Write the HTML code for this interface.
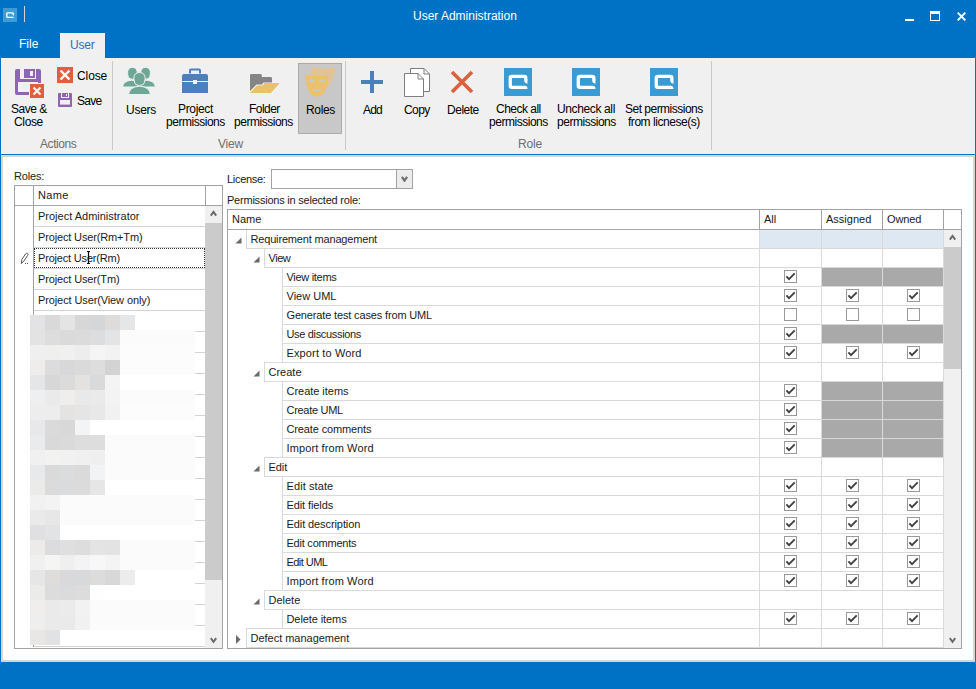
<!DOCTYPE html>
<html><head><meta charset="utf-8"><title>User Administration</title>
<style>
html,body{margin:0;padding:0}
body{width:976px;height:689px;overflow:hidden;background:#0072C6;position:relative;font-family:'Liberation Sans', sans-serif}
body div, body svg{position:absolute}
.t{white-space:pre;line-height:13px}
</style></head><body>
<div style="left:1px;top:58px;width:974px;height:96px;background:#F0F0F0;"></div>
<div style="left:60px;top:33px;width:45px;height:25px;background:#F0F0F0;"></div>
<div style="left:1px;top:155px;width:974px;height:507px;background:#D9D5D1;"></div>
<div style="left:3px;top:157px;width:970px;height:503px;background:#FFFFFF;"></div>
<div style="left:112px;top:61px;width:1px;height:89px;background:#C9C9C9;"></div>
<div style="left:345px;top:61px;width:1px;height:89px;background:#C9C9C9;"></div>
<div style="left:711px;top:61px;width:1px;height:89px;background:#C9C9C9;"></div>
<div style="left:298px;top:63px;width:44px;height:71px;background:#C8C8C8;box-sizing:border-box;border:1px solid #ABABAB;"></div>
<div style="left:14px;top:185px;width:209px;height:464px;background:#FFFFFF;box-sizing:border-box;border:1px solid #A3A3A3;"></div>
<div style="left:15px;top:205px;width:207px;height:1px;background:#A3A3A3;"></div>
<div style="left:33px;top:186px;width:1px;height:461px;background:#A3A3A3;"></div>
<div style="left:205px;top:186px;width:1px;height:19px;background:#A3A3A3;"></div>
<div style="left:34px;top:226px;width:171px;height:1px;background:#D4D4D4;"></div>
<div style="left:34px;top:247px;width:171px;height:1px;background:#D4D4D4;"></div>
<div style="left:34px;top:268px;width:171px;height:1px;background:#D4D4D4;"></div>
<div style="left:34px;top:289px;width:171px;height:1px;background:#D4D4D4;"></div>
<div style="left:34px;top:310px;width:171px;height:1px;background:#D4D4D4;"></div>
<div style="left:34px;top:331px;width:171px;height:1px;background:#D4D4D4;"></div>
<div style="left:34px;top:352px;width:171px;height:1px;background:#D4D4D4;"></div>
<div style="left:34px;top:373px;width:171px;height:1px;background:#D4D4D4;"></div>
<div style="left:34px;top:394px;width:171px;height:1px;background:#D4D4D4;"></div>
<div style="left:34px;top:415px;width:171px;height:1px;background:#D4D4D4;"></div>
<div style="left:34px;top:436px;width:171px;height:1px;background:#D4D4D4;"></div>
<div style="left:34px;top:457px;width:171px;height:1px;background:#D4D4D4;"></div>
<div style="left:34px;top:478px;width:171px;height:1px;background:#D4D4D4;"></div>
<div style="left:34px;top:499px;width:171px;height:1px;background:#D4D4D4;"></div>
<div style="left:34px;top:520px;width:171px;height:1px;background:#D4D4D4;"></div>
<div style="left:34px;top:541px;width:171px;height:1px;background:#D4D4D4;"></div>
<div style="left:34px;top:562px;width:171px;height:1px;background:#D4D4D4;"></div>
<div style="left:34px;top:583px;width:171px;height:1px;background:#D4D4D4;"></div>
<div style="left:34px;top:604px;width:171px;height:1px;background:#D4D4D4;"></div>
<div style="left:34px;top:625px;width:171px;height:1px;background:#D4D4D4;"></div>
<div style="left:34px;top:646px;width:171px;height:1px;background:#D4D4D4;"></div>
<div style="left:205px;top:206px;width:17px;height:442px;background:#F0F0F0;"></div>
<div style="left:205px;top:223px;width:17px;height:357px;background:#CBCBCB;"></div>
<div style="left:34px;top:248px;width:171px;height:20px;box-sizing:border-box;border:1px dotted #333;"></div>
<div style="left:30px;top:315px;width:165px;height:15px;background:#FFFFFF;"></div>
<div style="left:30px;top:315px;width:15px;height:15px;background:#E3E3E5;"></div>
<div style="left:45px;top:315px;width:15px;height:15px;background:#D9D9D9;"></div>
<div style="left:60px;top:315px;width:15px;height:15px;background:#E3E5E3;"></div>
<div style="left:75px;top:315px;width:15px;height:15px;background:#D7D7D7;"></div>
<div style="left:90px;top:315px;width:15px;height:15px;background:#D5D6D8;"></div>
<div style="left:105px;top:315px;width:15px;height:15px;background:#DDDCDA;"></div>
<div style="left:120px;top:315px;width:15px;height:15px;background:#E5E6E8;"></div>
<div style="left:30px;top:330px;width:165px;height:15px;background:#FBFBFB;"></div>
<div style="left:30px;top:330px;width:15px;height:15px;background:#E3E3E3;"></div>
<div style="left:45px;top:330px;width:15px;height:15px;background:#DDDDDD;"></div>
<div style="left:60px;top:330px;width:15px;height:15px;background:#DADADA;"></div>
<div style="left:75px;top:330px;width:15px;height:15px;background:#DBDBDB;"></div>
<div style="left:90px;top:330px;width:15px;height:15px;background:#DCDDDF;"></div>
<div style="left:105px;top:330px;width:15px;height:15px;background:#E3E4E6;"></div>
<div style="left:30px;top:345px;width:165px;height:15px;background:#FBFCFB;"></div>
<div style="left:30px;top:345px;width:15px;height:15px;background:#EFEFEF;"></div>
<div style="left:45px;top:345px;width:15px;height:15px;background:#EFEFED;"></div>
<div style="left:60px;top:345px;width:15px;height:15px;background:#F0F0F0;"></div>
<div style="left:75px;top:345px;width:15px;height:15px;background:#EDEDED;"></div>
<div style="left:90px;top:345px;width:15px;height:15px;background:#F5F5F5;"></div>
<div style="left:105px;top:345px;width:15px;height:15px;background:#F2F2F2;"></div>
<div style="left:30px;top:360px;width:165px;height:15px;background:#FBFCFB;"></div>
<div style="left:30px;top:360px;width:15px;height:15px;background:#EEEDEB;"></div>
<div style="left:45px;top:360px;width:15px;height:15px;background:#DCDCDC;"></div>
<div style="left:60px;top:360px;width:15px;height:15px;background:#D8D8DA;"></div>
<div style="left:75px;top:360px;width:15px;height:15px;background:#DADADA;"></div>
<div style="left:90px;top:360px;width:15px;height:15px;background:#DCDDDC;"></div>
<div style="left:105px;top:360px;width:15px;height:15px;background:#D3D3D3;"></div>
<div style="left:30px;top:375px;width:165px;height:15px;background:#FFFFFF;"></div>
<div style="left:30px;top:375px;width:15px;height:15px;background:#E5E6E8;"></div>
<div style="left:45px;top:375px;width:15px;height:15px;background:#D7D7D7;"></div>
<div style="left:60px;top:375px;width:15px;height:15px;background:#DBDBDB;"></div>
<div style="left:75px;top:375px;width:15px;height:15px;background:#E3E2E0;"></div>
<div style="left:90px;top:375px;width:15px;height:15px;background:#D9DADC;"></div>
<div style="left:105px;top:375px;width:15px;height:15px;background:#F4F4F4;"></div>
<div style="left:30px;top:390px;width:165px;height:15px;background:#FBFBFB;"></div>
<div style="left:30px;top:390px;width:15px;height:15px;background:#EEEFF1;"></div>
<div style="left:45px;top:390px;width:15px;height:15px;background:#EAEAEA;"></div>
<div style="left:60px;top:390px;width:15px;height:15px;background:#EFEEEC;"></div>
<div style="left:75px;top:390px;width:15px;height:15px;background:#E8E9EB;"></div>
<div style="left:90px;top:390px;width:15px;height:15px;background:#EAEAEA;"></div>
<div style="left:105px;top:390px;width:15px;height:15px;background:#F3F3F3;"></div>
<div style="left:30px;top:405px;width:165px;height:15px;background:#FCFCFC;"></div>
<div style="left:30px;top:405px;width:15px;height:15px;background:#ECEDEC;"></div>
<div style="left:45px;top:405px;width:15px;height:15px;background:#EDEDED;"></div>
<div style="left:60px;top:405px;width:15px;height:15px;background:#E3E3E3;"></div>
<div style="left:75px;top:405px;width:15px;height:15px;background:#E5E5E5;"></div>
<div style="left:90px;top:405px;width:15px;height:15px;background:#E8E8E8;"></div>
<div style="left:105px;top:405px;width:15px;height:15px;background:#F1F1F3;"></div>
<div style="left:30px;top:420px;width:165px;height:15px;background:#FFFFFF;"></div>
<div style="left:30px;top:420px;width:15px;height:15px;background:#E8E8EA;"></div>
<div style="left:45px;top:420px;width:15px;height:15px;background:#DADADA;"></div>
<div style="left:60px;top:420px;width:15px;height:15px;background:#D8D8D8;"></div>
<div style="left:75px;top:420px;width:15px;height:15px;background:#F3F4F6;"></div>
<div style="left:30px;top:435px;width:165px;height:15px;background:#FBFBFB;"></div>
<div style="left:30px;top:435px;width:15px;height:15px;background:#EAEBED;"></div>
<div style="left:45px;top:435px;width:15px;height:15px;background:#D9D9D9;"></div>
<div style="left:60px;top:435px;width:15px;height:15px;background:#DADADA;"></div>
<div style="left:75px;top:435px;width:15px;height:15px;background:#DCDDDC;"></div>
<div style="left:90px;top:435px;width:15px;height:15px;background:#DDDDDD;"></div>
<div style="left:30px;top:450px;width:165px;height:15px;background:#FBFBFB;"></div>
<div style="left:30px;top:450px;width:15px;height:15px;background:#F0F0F0;"></div>
<div style="left:45px;top:450px;width:15px;height:15px;background:#F2F2F0;"></div>
<div style="left:60px;top:450px;width:15px;height:15px;background:#F1F1F1;"></div>
<div style="left:75px;top:450px;width:15px;height:15px;background:#EFF0EF;"></div>
<div style="left:90px;top:450px;width:15px;height:15px;background:#EFEFEF;"></div>
<div style="left:30px;top:465px;width:165px;height:15px;background:#FBFBFB;"></div>
<div style="left:30px;top:465px;width:15px;height:15px;background:#E8E9EB;"></div>
<div style="left:45px;top:465px;width:15px;height:15px;background:#DADADA;"></div>
<div style="left:60px;top:465px;width:15px;height:15px;background:#DBDCDD;"></div>
<div style="left:75px;top:465px;width:15px;height:15px;background:#DADADA;"></div>
<div style="left:90px;top:465px;width:15px;height:15px;background:#F2F3F5;"></div>
<div style="left:30px;top:480px;width:165px;height:15px;background:#FFFFFF;"></div>
<div style="left:30px;top:480px;width:15px;height:15px;background:#EBEBE9;"></div>
<div style="left:45px;top:480px;width:15px;height:15px;background:#DBDBDB;"></div>
<div style="left:60px;top:480px;width:15px;height:15px;background:#DADBDC;"></div>
<div style="left:75px;top:480px;width:15px;height:15px;background:#DBDBDB;"></div>
<div style="left:90px;top:480px;width:15px;height:15px;background:#E6E6E6;"></div>
<div style="left:30px;top:495px;width:165px;height:15px;background:#FBFBFB;"></div>
<div style="left:30px;top:495px;width:15px;height:15px;background:#F1F1F1;"></div>
<div style="left:45px;top:495px;width:15px;height:15px;background:#F3F3F3;"></div>
<div style="left:30px;top:510px;width:165px;height:15px;background:#FBFBFB;"></div>
<div style="left:30px;top:510px;width:15px;height:15px;background:#EAEAEA;"></div>
<div style="left:45px;top:510px;width:15px;height:15px;background:#E7E7E7;"></div>
<div style="left:30px;top:525px;width:165px;height:15px;background:#FFFFFF;"></div>
<div style="left:30px;top:525px;width:15px;height:15px;background:#E0E0E2;"></div>
<div style="left:45px;top:525px;width:15px;height:15px;background:#E2E3E4;"></div>
<div style="left:30px;top:540px;width:165px;height:15px;background:#FBFBFB;"></div>
<div style="left:30px;top:540px;width:15px;height:15px;background:#ECEBE9;"></div>
<div style="left:45px;top:540px;width:15px;height:15px;background:#DCDCDE;"></div>
<div style="left:60px;top:540px;width:15px;height:15px;background:#DFDFDF;"></div>
<div style="left:75px;top:540px;width:15px;height:15px;background:#DDDDDB;"></div>
<div style="left:90px;top:540px;width:15px;height:15px;background:#E4E4E4;"></div>
<div style="left:105px;top:540px;width:15px;height:15px;background:#E3E3E3;"></div>
<div style="left:30px;top:555px;width:165px;height:15px;background:#FBFBFB;"></div>
<div style="left:30px;top:555px;width:15px;height:15px;background:#F0F0F0;"></div>
<div style="left:45px;top:555px;width:15px;height:15px;background:#F5F5F5;"></div>
<div style="left:60px;top:555px;width:15px;height:15px;background:#EFEFEF;"></div>
<div style="left:75px;top:555px;width:15px;height:15px;background:#F3F3F3;"></div>
<div style="left:90px;top:555px;width:15px;height:15px;background:#F7F7F7;"></div>
<div style="left:105px;top:555px;width:15px;height:15px;background:#F3F4F3;"></div>
<div style="left:30px;top:570px;width:165px;height:15px;background:#FFFFFF;"></div>
<div style="left:30px;top:570px;width:15px;height:15px;background:#E6E6E6;"></div>
<div style="left:45px;top:570px;width:15px;height:15px;background:#DEDDDB;"></div>
<div style="left:60px;top:570px;width:15px;height:15px;background:#D9D9DB;"></div>
<div style="left:75px;top:570px;width:15px;height:15px;background:#D8D9DB;"></div>
<div style="left:90px;top:570px;width:15px;height:15px;background:#DCDCDA;"></div>
<div style="left:105px;top:570px;width:15px;height:15px;background:#D8D8D8;"></div>
<div style="left:120px;top:570px;width:15px;height:15px;background:#EBECEB;"></div>
<div style="left:30px;top:585px;width:165px;height:15px;background:#FFFFFF;"></div>
<div style="left:30px;top:585px;width:15px;height:15px;background:#EBEBE9;"></div>
<div style="left:45px;top:585px;width:15px;height:15px;background:#DCDCDC;"></div>
<div style="left:60px;top:585px;width:15px;height:15px;background:#DADBDC;"></div>
<div style="left:75px;top:585px;width:15px;height:15px;background:#DCDCDC;"></div>
<div style="left:90px;top:585px;width:15px;height:15px;background:#FDFEFF;"></div>
<div style="left:30px;top:600px;width:165px;height:15px;background:#FBFBFB;"></div>
<div style="left:30px;top:600px;width:15px;height:15px;background:#EFEEEC;"></div>
<div style="left:45px;top:600px;width:15px;height:15px;background:#EAEAEA;"></div>
<div style="left:60px;top:600px;width:15px;height:15px;background:#EBEBEB;"></div>
<div style="left:75px;top:600px;width:15px;height:15px;background:#F2F2F2;"></div>
<div style="left:30px;top:615px;width:165px;height:15px;background:#FBFBFB;"></div>
<div style="left:30px;top:615px;width:15px;height:15px;background:#EEEEEE;"></div>
<div style="left:45px;top:615px;width:15px;height:15px;background:#EAEAEA;"></div>
<div style="left:60px;top:615px;width:15px;height:15px;background:#EAEAEA;"></div>
<div style="left:75px;top:615px;width:15px;height:15px;background:#F0F1F0;"></div>
<div style="left:30px;top:630px;width:165px;height:15px;background:#FFFFFF;"></div>
<div style="left:30px;top:630px;width:15px;height:15px;background:#E8E7E5;"></div>
<div style="left:45px;top:630px;width:15px;height:15px;background:#E1E2E3;"></div>
<div style="left:271px;top:169px;width:142px;height:20px;background:#FFFFFF;box-sizing:border-box;border:1px solid #A3A3A3;"></div>
<div style="left:396px;top:170px;width:1px;height:18px;background:#A3A3A3;"></div>
<div style="left:397px;top:170px;width:15px;height:18px;background:#ECECEC;"></div>
<div style="left:227px;top:209px;width:735px;height:440px;background:#FFFFFF;box-sizing:border-box;border:1px solid #A3A3A3;"></div>
<div style="left:228px;top:229px;width:733px;height:1px;background:#A3A3A3;"></div>
<div style="left:759px;top:210px;width:1px;height:19px;background:#A3A3A3;"></div>
<div style="left:821px;top:210px;width:1px;height:19px;background:#A3A3A3;"></div>
<div style="left:882px;top:210px;width:1px;height:19px;background:#A3A3A3;"></div>
<div style="left:943px;top:210px;width:1px;height:19px;background:#A3A3A3;"></div>
<div style="left:760px;top:230px;width:183px;height:18px;background:#DEE8F3;"></div>
<div style="left:246px;top:248px;width:697px;height:1px;background:#D9D9D9;"></div>
<div style="left:246px;top:230px;width:1px;height:18px;background:#D9D9D9;"></div>
<div style="left:759px;top:230px;width:1px;height:18px;background:#D9D9D9;"></div>
<div style="left:821px;top:230px;width:1px;height:18px;background:#D9D9D9;"></div>
<div style="left:882px;top:230px;width:1px;height:18px;background:#D9D9D9;"></div>
<svg style="left:235px;top:237px" width="7" height="7" viewBox="0 0 7 7"><path d="M6.5 0.5 L6.5 6.5 L0.5 6.5 Z" fill="#6A6A6A"/></svg>
<div style="left:264px;top:248px;width:679px;height:1px;background:#D9D9D9;"></div>
<div style="left:264px;top:267px;width:679px;height:1px;background:#D9D9D9;"></div>
<div style="left:264px;top:249px;width:1px;height:18px;background:#D9D9D9;"></div>
<div style="left:759px;top:249px;width:1px;height:18px;background:#D9D9D9;"></div>
<div style="left:821px;top:249px;width:1px;height:18px;background:#D9D9D9;"></div>
<div style="left:882px;top:249px;width:1px;height:18px;background:#D9D9D9;"></div>
<svg style="left:253px;top:256px" width="7" height="7" viewBox="0 0 7 7"><path d="M6.5 0.5 L6.5 6.5 L0.5 6.5 Z" fill="#6A6A6A"/></svg>
<div style="left:282px;top:267px;width:661px;height:1px;background:#D9D9D9;"></div>
<div style="left:282px;top:286px;width:661px;height:1px;background:#D9D9D9;"></div>
<div style="left:282px;top:268px;width:1px;height:18px;background:#D9D9D9;"></div>
<div style="left:759px;top:268px;width:1px;height:18px;background:#D9D9D9;"></div>
<div style="left:821px;top:268px;width:1px;height:18px;background:#D9D9D9;"></div>
<div style="left:882px;top:268px;width:1px;height:18px;background:#D9D9D9;"></div>
<svg style="left:784px;top:270px" width="13" height="13" viewBox="0 0 13 13"><rect x="0.5" y="0.5" width="12" height="12" fill="#fff" stroke="#999999"/><path d="M2.4 6.4 L5 9.1 L10.7 3.4" fill="none" stroke="#404040" stroke-width="1.9"/></svg>
<div style="left:822px;top:268px;width:60px;height:18px;background:#A9A9A9;"></div>
<div style="left:883px;top:268px;width:60px;height:18px;background:#A9A9A9;"></div>
<div style="left:282px;top:286px;width:661px;height:1px;background:#D9D9D9;"></div>
<div style="left:282px;top:305px;width:661px;height:1px;background:#D9D9D9;"></div>
<div style="left:282px;top:287px;width:1px;height:18px;background:#D9D9D9;"></div>
<div style="left:759px;top:287px;width:1px;height:18px;background:#D9D9D9;"></div>
<div style="left:821px;top:287px;width:1px;height:18px;background:#D9D9D9;"></div>
<div style="left:882px;top:287px;width:1px;height:18px;background:#D9D9D9;"></div>
<svg style="left:784px;top:289px" width="13" height="13" viewBox="0 0 13 13"><rect x="0.5" y="0.5" width="12" height="12" fill="#fff" stroke="#999999"/><path d="M2.4 6.4 L5 9.1 L10.7 3.4" fill="none" stroke="#404040" stroke-width="1.9"/></svg>
<svg style="left:846px;top:289px" width="13" height="13" viewBox="0 0 13 13"><rect x="0.5" y="0.5" width="12" height="12" fill="#fff" stroke="#999999"/><path d="M2.4 6.4 L5 9.1 L10.7 3.4" fill="none" stroke="#404040" stroke-width="1.9"/></svg>
<svg style="left:907px;top:289px" width="13" height="13" viewBox="0 0 13 13"><rect x="0.5" y="0.5" width="12" height="12" fill="#fff" stroke="#999999"/><path d="M2.4 6.4 L5 9.1 L10.7 3.4" fill="none" stroke="#404040" stroke-width="1.9"/></svg>
<div style="left:282px;top:305px;width:661px;height:1px;background:#D9D9D9;"></div>
<div style="left:282px;top:324px;width:661px;height:1px;background:#D9D9D9;"></div>
<div style="left:282px;top:306px;width:1px;height:18px;background:#D9D9D9;"></div>
<div style="left:759px;top:306px;width:1px;height:18px;background:#D9D9D9;"></div>
<div style="left:821px;top:306px;width:1px;height:18px;background:#D9D9D9;"></div>
<div style="left:882px;top:306px;width:1px;height:18px;background:#D9D9D9;"></div>
<svg style="left:784px;top:308px" width="13" height="13" viewBox="0 0 13 13"><rect x="0.5" y="0.5" width="12" height="12" fill="#fff" stroke="#999999"/></svg>
<svg style="left:846px;top:308px" width="13" height="13" viewBox="0 0 13 13"><rect x="0.5" y="0.5" width="12" height="12" fill="#fff" stroke="#999999"/></svg>
<svg style="left:907px;top:308px" width="13" height="13" viewBox="0 0 13 13"><rect x="0.5" y="0.5" width="12" height="12" fill="#fff" stroke="#999999"/></svg>
<div style="left:282px;top:324px;width:661px;height:1px;background:#D9D9D9;"></div>
<div style="left:282px;top:343px;width:661px;height:1px;background:#D9D9D9;"></div>
<div style="left:282px;top:325px;width:1px;height:18px;background:#D9D9D9;"></div>
<div style="left:759px;top:325px;width:1px;height:18px;background:#D9D9D9;"></div>
<div style="left:821px;top:325px;width:1px;height:18px;background:#D9D9D9;"></div>
<div style="left:882px;top:325px;width:1px;height:18px;background:#D9D9D9;"></div>
<svg style="left:784px;top:327px" width="13" height="13" viewBox="0 0 13 13"><rect x="0.5" y="0.5" width="12" height="12" fill="#fff" stroke="#999999"/><path d="M2.4 6.4 L5 9.1 L10.7 3.4" fill="none" stroke="#404040" stroke-width="1.9"/></svg>
<div style="left:822px;top:325px;width:60px;height:18px;background:#A9A9A9;"></div>
<div style="left:883px;top:325px;width:60px;height:18px;background:#A9A9A9;"></div>
<div style="left:282px;top:343px;width:661px;height:1px;background:#D9D9D9;"></div>
<div style="left:282px;top:362px;width:661px;height:1px;background:#D9D9D9;"></div>
<div style="left:282px;top:344px;width:1px;height:18px;background:#D9D9D9;"></div>
<div style="left:759px;top:344px;width:1px;height:18px;background:#D9D9D9;"></div>
<div style="left:821px;top:344px;width:1px;height:18px;background:#D9D9D9;"></div>
<div style="left:882px;top:344px;width:1px;height:18px;background:#D9D9D9;"></div>
<svg style="left:784px;top:346px" width="13" height="13" viewBox="0 0 13 13"><rect x="0.5" y="0.5" width="12" height="12" fill="#fff" stroke="#999999"/><path d="M2.4 6.4 L5 9.1 L10.7 3.4" fill="none" stroke="#404040" stroke-width="1.9"/></svg>
<svg style="left:846px;top:346px" width="13" height="13" viewBox="0 0 13 13"><rect x="0.5" y="0.5" width="12" height="12" fill="#fff" stroke="#999999"/><path d="M2.4 6.4 L5 9.1 L10.7 3.4" fill="none" stroke="#404040" stroke-width="1.9"/></svg>
<svg style="left:907px;top:346px" width="13" height="13" viewBox="0 0 13 13"><rect x="0.5" y="0.5" width="12" height="12" fill="#fff" stroke="#999999"/><path d="M2.4 6.4 L5 9.1 L10.7 3.4" fill="none" stroke="#404040" stroke-width="1.9"/></svg>
<div style="left:264px;top:362px;width:679px;height:1px;background:#D9D9D9;"></div>
<div style="left:264px;top:381px;width:679px;height:1px;background:#D9D9D9;"></div>
<div style="left:264px;top:363px;width:1px;height:18px;background:#D9D9D9;"></div>
<div style="left:759px;top:363px;width:1px;height:18px;background:#D9D9D9;"></div>
<div style="left:821px;top:363px;width:1px;height:18px;background:#D9D9D9;"></div>
<div style="left:882px;top:363px;width:1px;height:18px;background:#D9D9D9;"></div>
<svg style="left:253px;top:370px" width="7" height="7" viewBox="0 0 7 7"><path d="M6.5 0.5 L6.5 6.5 L0.5 6.5 Z" fill="#6A6A6A"/></svg>
<div style="left:282px;top:381px;width:661px;height:1px;background:#D9D9D9;"></div>
<div style="left:282px;top:400px;width:661px;height:1px;background:#D9D9D9;"></div>
<div style="left:282px;top:382px;width:1px;height:18px;background:#D9D9D9;"></div>
<div style="left:759px;top:382px;width:1px;height:18px;background:#D9D9D9;"></div>
<div style="left:821px;top:382px;width:1px;height:18px;background:#D9D9D9;"></div>
<div style="left:882px;top:382px;width:1px;height:18px;background:#D9D9D9;"></div>
<svg style="left:784px;top:384px" width="13" height="13" viewBox="0 0 13 13"><rect x="0.5" y="0.5" width="12" height="12" fill="#fff" stroke="#999999"/><path d="M2.4 6.4 L5 9.1 L10.7 3.4" fill="none" stroke="#404040" stroke-width="1.9"/></svg>
<div style="left:822px;top:382px;width:60px;height:18px;background:#A9A9A9;"></div>
<div style="left:883px;top:382px;width:60px;height:18px;background:#A9A9A9;"></div>
<div style="left:282px;top:400px;width:661px;height:1px;background:#D9D9D9;"></div>
<div style="left:282px;top:419px;width:661px;height:1px;background:#D9D9D9;"></div>
<div style="left:282px;top:401px;width:1px;height:18px;background:#D9D9D9;"></div>
<div style="left:759px;top:401px;width:1px;height:18px;background:#D9D9D9;"></div>
<div style="left:821px;top:401px;width:1px;height:18px;background:#D9D9D9;"></div>
<div style="left:882px;top:401px;width:1px;height:18px;background:#D9D9D9;"></div>
<svg style="left:784px;top:403px" width="13" height="13" viewBox="0 0 13 13"><rect x="0.5" y="0.5" width="12" height="12" fill="#fff" stroke="#999999"/><path d="M2.4 6.4 L5 9.1 L10.7 3.4" fill="none" stroke="#404040" stroke-width="1.9"/></svg>
<div style="left:822px;top:401px;width:60px;height:18px;background:#A9A9A9;"></div>
<div style="left:883px;top:401px;width:60px;height:18px;background:#A9A9A9;"></div>
<div style="left:282px;top:419px;width:661px;height:1px;background:#D9D9D9;"></div>
<div style="left:282px;top:438px;width:661px;height:1px;background:#D9D9D9;"></div>
<div style="left:282px;top:420px;width:1px;height:18px;background:#D9D9D9;"></div>
<div style="left:759px;top:420px;width:1px;height:18px;background:#D9D9D9;"></div>
<div style="left:821px;top:420px;width:1px;height:18px;background:#D9D9D9;"></div>
<div style="left:882px;top:420px;width:1px;height:18px;background:#D9D9D9;"></div>
<svg style="left:784px;top:422px" width="13" height="13" viewBox="0 0 13 13"><rect x="0.5" y="0.5" width="12" height="12" fill="#fff" stroke="#999999"/><path d="M2.4 6.4 L5 9.1 L10.7 3.4" fill="none" stroke="#404040" stroke-width="1.9"/></svg>
<div style="left:822px;top:420px;width:60px;height:18px;background:#A9A9A9;"></div>
<div style="left:883px;top:420px;width:60px;height:18px;background:#A9A9A9;"></div>
<div style="left:282px;top:438px;width:661px;height:1px;background:#D9D9D9;"></div>
<div style="left:282px;top:457px;width:661px;height:1px;background:#D9D9D9;"></div>
<div style="left:282px;top:439px;width:1px;height:18px;background:#D9D9D9;"></div>
<div style="left:759px;top:439px;width:1px;height:18px;background:#D9D9D9;"></div>
<div style="left:821px;top:439px;width:1px;height:18px;background:#D9D9D9;"></div>
<div style="left:882px;top:439px;width:1px;height:18px;background:#D9D9D9;"></div>
<svg style="left:784px;top:441px" width="13" height="13" viewBox="0 0 13 13"><rect x="0.5" y="0.5" width="12" height="12" fill="#fff" stroke="#999999"/><path d="M2.4 6.4 L5 9.1 L10.7 3.4" fill="none" stroke="#404040" stroke-width="1.9"/></svg>
<div style="left:822px;top:439px;width:60px;height:18px;background:#A9A9A9;"></div>
<div style="left:883px;top:439px;width:60px;height:18px;background:#A9A9A9;"></div>
<div style="left:264px;top:457px;width:679px;height:1px;background:#D9D9D9;"></div>
<div style="left:264px;top:476px;width:679px;height:1px;background:#D9D9D9;"></div>
<div style="left:264px;top:458px;width:1px;height:18px;background:#D9D9D9;"></div>
<div style="left:759px;top:458px;width:1px;height:18px;background:#D9D9D9;"></div>
<div style="left:821px;top:458px;width:1px;height:18px;background:#D9D9D9;"></div>
<div style="left:882px;top:458px;width:1px;height:18px;background:#D9D9D9;"></div>
<svg style="left:253px;top:465px" width="7" height="7" viewBox="0 0 7 7"><path d="M6.5 0.5 L6.5 6.5 L0.5 6.5 Z" fill="#6A6A6A"/></svg>
<div style="left:282px;top:476px;width:661px;height:1px;background:#D9D9D9;"></div>
<div style="left:282px;top:495px;width:661px;height:1px;background:#D9D9D9;"></div>
<div style="left:282px;top:477px;width:1px;height:18px;background:#D9D9D9;"></div>
<div style="left:759px;top:477px;width:1px;height:18px;background:#D9D9D9;"></div>
<div style="left:821px;top:477px;width:1px;height:18px;background:#D9D9D9;"></div>
<div style="left:882px;top:477px;width:1px;height:18px;background:#D9D9D9;"></div>
<svg style="left:784px;top:479px" width="13" height="13" viewBox="0 0 13 13"><rect x="0.5" y="0.5" width="12" height="12" fill="#fff" stroke="#999999"/><path d="M2.4 6.4 L5 9.1 L10.7 3.4" fill="none" stroke="#404040" stroke-width="1.9"/></svg>
<svg style="left:846px;top:479px" width="13" height="13" viewBox="0 0 13 13"><rect x="0.5" y="0.5" width="12" height="12" fill="#fff" stroke="#999999"/><path d="M2.4 6.4 L5 9.1 L10.7 3.4" fill="none" stroke="#404040" stroke-width="1.9"/></svg>
<svg style="left:907px;top:479px" width="13" height="13" viewBox="0 0 13 13"><rect x="0.5" y="0.5" width="12" height="12" fill="#fff" stroke="#999999"/><path d="M2.4 6.4 L5 9.1 L10.7 3.4" fill="none" stroke="#404040" stroke-width="1.9"/></svg>
<div style="left:282px;top:495px;width:661px;height:1px;background:#D9D9D9;"></div>
<div style="left:282px;top:514px;width:661px;height:1px;background:#D9D9D9;"></div>
<div style="left:282px;top:496px;width:1px;height:18px;background:#D9D9D9;"></div>
<div style="left:759px;top:496px;width:1px;height:18px;background:#D9D9D9;"></div>
<div style="left:821px;top:496px;width:1px;height:18px;background:#D9D9D9;"></div>
<div style="left:882px;top:496px;width:1px;height:18px;background:#D9D9D9;"></div>
<svg style="left:784px;top:498px" width="13" height="13" viewBox="0 0 13 13"><rect x="0.5" y="0.5" width="12" height="12" fill="#fff" stroke="#999999"/><path d="M2.4 6.4 L5 9.1 L10.7 3.4" fill="none" stroke="#404040" stroke-width="1.9"/></svg>
<svg style="left:846px;top:498px" width="13" height="13" viewBox="0 0 13 13"><rect x="0.5" y="0.5" width="12" height="12" fill="#fff" stroke="#999999"/><path d="M2.4 6.4 L5 9.1 L10.7 3.4" fill="none" stroke="#404040" stroke-width="1.9"/></svg>
<svg style="left:907px;top:498px" width="13" height="13" viewBox="0 0 13 13"><rect x="0.5" y="0.5" width="12" height="12" fill="#fff" stroke="#999999"/><path d="M2.4 6.4 L5 9.1 L10.7 3.4" fill="none" stroke="#404040" stroke-width="1.9"/></svg>
<div style="left:282px;top:514px;width:661px;height:1px;background:#D9D9D9;"></div>
<div style="left:282px;top:533px;width:661px;height:1px;background:#D9D9D9;"></div>
<div style="left:282px;top:515px;width:1px;height:18px;background:#D9D9D9;"></div>
<div style="left:759px;top:515px;width:1px;height:18px;background:#D9D9D9;"></div>
<div style="left:821px;top:515px;width:1px;height:18px;background:#D9D9D9;"></div>
<div style="left:882px;top:515px;width:1px;height:18px;background:#D9D9D9;"></div>
<svg style="left:784px;top:517px" width="13" height="13" viewBox="0 0 13 13"><rect x="0.5" y="0.5" width="12" height="12" fill="#fff" stroke="#999999"/><path d="M2.4 6.4 L5 9.1 L10.7 3.4" fill="none" stroke="#404040" stroke-width="1.9"/></svg>
<svg style="left:846px;top:517px" width="13" height="13" viewBox="0 0 13 13"><rect x="0.5" y="0.5" width="12" height="12" fill="#fff" stroke="#999999"/><path d="M2.4 6.4 L5 9.1 L10.7 3.4" fill="none" stroke="#404040" stroke-width="1.9"/></svg>
<svg style="left:907px;top:517px" width="13" height="13" viewBox="0 0 13 13"><rect x="0.5" y="0.5" width="12" height="12" fill="#fff" stroke="#999999"/><path d="M2.4 6.4 L5 9.1 L10.7 3.4" fill="none" stroke="#404040" stroke-width="1.9"/></svg>
<div style="left:282px;top:533px;width:661px;height:1px;background:#D9D9D9;"></div>
<div style="left:282px;top:552px;width:661px;height:1px;background:#D9D9D9;"></div>
<div style="left:282px;top:534px;width:1px;height:18px;background:#D9D9D9;"></div>
<div style="left:759px;top:534px;width:1px;height:18px;background:#D9D9D9;"></div>
<div style="left:821px;top:534px;width:1px;height:18px;background:#D9D9D9;"></div>
<div style="left:882px;top:534px;width:1px;height:18px;background:#D9D9D9;"></div>
<svg style="left:784px;top:536px" width="13" height="13" viewBox="0 0 13 13"><rect x="0.5" y="0.5" width="12" height="12" fill="#fff" stroke="#999999"/><path d="M2.4 6.4 L5 9.1 L10.7 3.4" fill="none" stroke="#404040" stroke-width="1.9"/></svg>
<svg style="left:846px;top:536px" width="13" height="13" viewBox="0 0 13 13"><rect x="0.5" y="0.5" width="12" height="12" fill="#fff" stroke="#999999"/><path d="M2.4 6.4 L5 9.1 L10.7 3.4" fill="none" stroke="#404040" stroke-width="1.9"/></svg>
<svg style="left:907px;top:536px" width="13" height="13" viewBox="0 0 13 13"><rect x="0.5" y="0.5" width="12" height="12" fill="#fff" stroke="#999999"/><path d="M2.4 6.4 L5 9.1 L10.7 3.4" fill="none" stroke="#404040" stroke-width="1.9"/></svg>
<div style="left:282px;top:552px;width:661px;height:1px;background:#D9D9D9;"></div>
<div style="left:282px;top:571px;width:661px;height:1px;background:#D9D9D9;"></div>
<div style="left:282px;top:553px;width:1px;height:18px;background:#D9D9D9;"></div>
<div style="left:759px;top:553px;width:1px;height:18px;background:#D9D9D9;"></div>
<div style="left:821px;top:553px;width:1px;height:18px;background:#D9D9D9;"></div>
<div style="left:882px;top:553px;width:1px;height:18px;background:#D9D9D9;"></div>
<svg style="left:784px;top:555px" width="13" height="13" viewBox="0 0 13 13"><rect x="0.5" y="0.5" width="12" height="12" fill="#fff" stroke="#999999"/><path d="M2.4 6.4 L5 9.1 L10.7 3.4" fill="none" stroke="#404040" stroke-width="1.9"/></svg>
<svg style="left:846px;top:555px" width="13" height="13" viewBox="0 0 13 13"><rect x="0.5" y="0.5" width="12" height="12" fill="#fff" stroke="#999999"/><path d="M2.4 6.4 L5 9.1 L10.7 3.4" fill="none" stroke="#404040" stroke-width="1.9"/></svg>
<svg style="left:907px;top:555px" width="13" height="13" viewBox="0 0 13 13"><rect x="0.5" y="0.5" width="12" height="12" fill="#fff" stroke="#999999"/><path d="M2.4 6.4 L5 9.1 L10.7 3.4" fill="none" stroke="#404040" stroke-width="1.9"/></svg>
<div style="left:282px;top:571px;width:661px;height:1px;background:#D9D9D9;"></div>
<div style="left:282px;top:590px;width:661px;height:1px;background:#D9D9D9;"></div>
<div style="left:282px;top:572px;width:1px;height:18px;background:#D9D9D9;"></div>
<div style="left:759px;top:572px;width:1px;height:18px;background:#D9D9D9;"></div>
<div style="left:821px;top:572px;width:1px;height:18px;background:#D9D9D9;"></div>
<div style="left:882px;top:572px;width:1px;height:18px;background:#D9D9D9;"></div>
<svg style="left:784px;top:574px" width="13" height="13" viewBox="0 0 13 13"><rect x="0.5" y="0.5" width="12" height="12" fill="#fff" stroke="#999999"/><path d="M2.4 6.4 L5 9.1 L10.7 3.4" fill="none" stroke="#404040" stroke-width="1.9"/></svg>
<svg style="left:846px;top:574px" width="13" height="13" viewBox="0 0 13 13"><rect x="0.5" y="0.5" width="12" height="12" fill="#fff" stroke="#999999"/><path d="M2.4 6.4 L5 9.1 L10.7 3.4" fill="none" stroke="#404040" stroke-width="1.9"/></svg>
<svg style="left:907px;top:574px" width="13" height="13" viewBox="0 0 13 13"><rect x="0.5" y="0.5" width="12" height="12" fill="#fff" stroke="#999999"/><path d="M2.4 6.4 L5 9.1 L10.7 3.4" fill="none" stroke="#404040" stroke-width="1.9"/></svg>
<div style="left:264px;top:590px;width:679px;height:1px;background:#D9D9D9;"></div>
<div style="left:264px;top:609px;width:679px;height:1px;background:#D9D9D9;"></div>
<div style="left:264px;top:591px;width:1px;height:18px;background:#D9D9D9;"></div>
<div style="left:759px;top:591px;width:1px;height:18px;background:#D9D9D9;"></div>
<div style="left:821px;top:591px;width:1px;height:18px;background:#D9D9D9;"></div>
<div style="left:882px;top:591px;width:1px;height:18px;background:#D9D9D9;"></div>
<svg style="left:253px;top:598px" width="7" height="7" viewBox="0 0 7 7"><path d="M6.5 0.5 L6.5 6.5 L0.5 6.5 Z" fill="#6A6A6A"/></svg>
<div style="left:282px;top:609px;width:661px;height:1px;background:#D9D9D9;"></div>
<div style="left:282px;top:628px;width:661px;height:1px;background:#D9D9D9;"></div>
<div style="left:282px;top:610px;width:1px;height:18px;background:#D9D9D9;"></div>
<div style="left:759px;top:610px;width:1px;height:18px;background:#D9D9D9;"></div>
<div style="left:821px;top:610px;width:1px;height:18px;background:#D9D9D9;"></div>
<div style="left:882px;top:610px;width:1px;height:18px;background:#D9D9D9;"></div>
<svg style="left:784px;top:612px" width="13" height="13" viewBox="0 0 13 13"><rect x="0.5" y="0.5" width="12" height="12" fill="#fff" stroke="#999999"/><path d="M2.4 6.4 L5 9.1 L10.7 3.4" fill="none" stroke="#404040" stroke-width="1.9"/></svg>
<svg style="left:846px;top:612px" width="13" height="13" viewBox="0 0 13 13"><rect x="0.5" y="0.5" width="12" height="12" fill="#fff" stroke="#999999"/><path d="M2.4 6.4 L5 9.1 L10.7 3.4" fill="none" stroke="#404040" stroke-width="1.9"/></svg>
<svg style="left:907px;top:612px" width="13" height="13" viewBox="0 0 13 13"><rect x="0.5" y="0.5" width="12" height="12" fill="#fff" stroke="#999999"/><path d="M2.4 6.4 L5 9.1 L10.7 3.4" fill="none" stroke="#404040" stroke-width="1.9"/></svg>
<div style="left:246px;top:628px;width:697px;height:1px;background:#D9D9D9;"></div>
<div style="left:246px;top:647px;width:697px;height:1px;background:#D9D9D9;"></div>
<div style="left:246px;top:629px;width:1px;height:18px;background:#D9D9D9;"></div>
<div style="left:759px;top:629px;width:1px;height:18px;background:#D9D9D9;"></div>
<div style="left:821px;top:629px;width:1px;height:18px;background:#D9D9D9;"></div>
<div style="left:882px;top:629px;width:1px;height:18px;background:#D9D9D9;"></div>
<svg style="left:236px;top:635px" width="5" height="9" viewBox="0 0 5 9"><path d="M0 0 L4.5 4.5 L0 9 Z" fill="#6A6A6A"/></svg>
<div style="left:943px;top:230px;width:1px;height:418px;background:#DADADA;"></div>
<div style="left:944px;top:230px;width:17px;height:418px;background:#F0F0F0;"></div>
<div style="left:944px;top:247px;width:17px;height:122px;background:#CBCBCB;"></div>
<svg style="left:3px;top:8px" width="14" height="14" viewBox="0 0 28 28"><rect width="28" height="28" fill="#3F9CD2"/><g transform="translate(14 14.25) scale(0.82 0.77) translate(-14.05 -13.85)"><path fill="#fff" d="M23.5 15.7 L23.5 10 Q23.5 6.7 20.2 6.7 L7.9 6.7 Q4.6 6.7 4.6 10 L4.6 17.7 Q4.6 21 7.9 21 L23.5 21 L23.2 19.2 Q22.6 17.8 20.5 17.8 L8.6 17.8 Q7.9 17.8 7.9 17.1 L7.9 10.6 Q7.9 9.9 8.6 9.9 L19.6 9.9 Q20.2 9.9 20.2 10.6 L20.2 12.5 Q20.5 15.2 23.5 15.7 Z"/></g></svg>
<div style="left:24px;top:6px;width:1px;height:16px;background:#D6D3CE"></div>
<div style="left:905px;top:19px;width:9px;height:2px;background:#fff"></div>
<div style="left:930px;top:11px;width:10px;height:10px;box-sizing:border-box;border:1px solid #fff;border-top-width:3px"></div>
<svg style="left:957px;top:12px" width="9" height="9" viewBox="0 0 9 9"><path d="M0.7 0.7 L8.3 8.3 M8.3 0.7 L0.7 8.3" stroke="#fff" stroke-width="1.9"/></svg>
<svg style="left:14px;top:66px" width="32" height="33" viewBox="14 66 32 33">
   <rect x="15" y="69" width="26" height="26" rx="2" fill="#8E65AF"/>
   <rect x="20" y="69" width="16" height="10" fill="#F0F0F0"/>
   <rect x="24" y="69" width="11" height="9" fill="#8E65AF"/>
   <rect x="30" y="71" width="3" height="5" fill="#F0F0F0"/>
   <rect x="18" y="82" width="20" height="10" fill="#F0F0F0"/>
   <rect x="29.5" y="83.5" width="15" height="15" fill="#DD5F3D" stroke="#F0F0F0" stroke-width="1"/>
   <path d="M33.5 87.5 L40.5 94.5 M40.5 87.5 L33.5 94.5" stroke="#F2F2F2" stroke-width="2.2"/>
 </svg>
<svg style="left:57px;top:67px" width="16" height="16" viewBox="0 0 16 16"><rect width="16" height="16" fill="#DD5F3D"/><path d="M3.5 3.5 L12.5 12.5 M12.5 3.5 L3.5 12.5" stroke="#fff" stroke-width="2.4"/></svg>
<svg style="left:57px;top:92px" width="16" height="16" viewBox="0 0 16 16">
   <rect x="1" y="1" width="14" height="14" rx="1" fill="#8E65AF"/>
   <rect x="4" y="1" width="8" height="5" fill="#F0F0F0"/>
   <rect x="5" y="1" width="6" height="4" fill="#8E65AF"/>
   <rect x="9" y="2" width="1" height="2" fill="#F0F0F0"/>
   <rect x="3" y="8" width="10" height="4.6" fill="#F0F0F0"/>
 </svg>
<svg style="left:122px;top:66px" width="34" height="30" viewBox="122 66 34 30"><g fill="#6FA797" stroke="#F0F0F0" stroke-width="1">
   <path d="M132.4 67.4 C138.5 67.4 137.8 74.8 135.7 78.3 Q132.4 80.4 129.1 78.3 C127.0 74.8 126.3 67.4 132.4 67.4 Z"/><path d="M122.6 87 Q123 81 131.5 80.2 Q139.5 80.8 140.5 87 Z"/>
   <path d="M145.6 67.4 C151.7 67.4 151.0 74.8 148.9 78.3 Q145.6 80.4 142.3 78.3 C140.2 74.8 139.5 67.4 145.6 67.4 Z"/><path d="M137.5 87 Q138.5 80.8 146.5 80.2 Q155 81 155.4 87 Z"/>
   <path d="M128.5 94.5 Q129.3 86.8 139.5 86.2 Q149.7 86.8 150.5 94.5 Z"/>
   <path d="M139.5 72.5 C146.7 72.5 145.8 80.7 143.3 84.5 Q139.5 86.7 135.7 84.5 C133.2 80.7 132.3 72.5 139.5 72.5 Z"/>
 </g></svg>
<svg style="left:180px;top:67px" width="30" height="28" viewBox="180 67 30 28">
   <path d="M190 73.5 L190 70.5 Q190 69.5 191 69.5 L199 69.5 Q200 69.5 200 70.5 L200 73.5" fill="none" stroke="#4C80BD" stroke-width="2"/>
   <path d="M182 76 Q182 74 184 74 L206 74 Q208 74 208 76 L208 81 L182 81 Z" fill="#4C80BD"/>
   <rect x="182" y="82" width="26" height="11" fill="#4C80BD"/>
   <rect x="193" y="80" width="4" height="4" fill="#F4F4F4"/>
 </svg>
<svg style="left:248px;top:72px" width="34" height="23" viewBox="248 72 34 23">
   <path d="M250 91 L250 75.2 Q250 74 251.2 74 L260.5 74 Q261.8 74 261.8 75.2 L261.8 77 L270.8 77 Q272 77 272 78.2 L272 82.5 L263.5 82.5 L262 84.5 L256.5 84.5 Z" fill="#858585"/>
   <path d="M250 93 L257 85.5 L262.8 85.5 L264.5 83 L278.5 83 Q279.5 83.3 278.8 84.2 L270.8 93 Z" fill="#EBC06B"/>
 </svg>
<svg style="left:304px;top:66px" width="32" height="32" viewBox="304 66 32 32">
   <path d="M311 67.3 Q323 70 334.8 67.3 Q334.5 80 327 88 L328.5 74 Q321 76.5 311 74.5 Z" fill="#E4C38C" opacity="0.9"/>
   <path d="M305 73.9 Q317 77 328.8 73.9 C329 85 325 97 317 97 C309 97 305 85 305 73.9 Z" fill="#EDC06B" stroke="#C8C8C8" stroke-width="0.6"/>
   <path d="M308.2 82 Q308.8 79 311.9 79 Q315 79 315.5 82 Z M318.4 82 Q319 79 322 79 Q325 79 325.6 82 Z M312.3 89 L321.8 89 Q321 92 317 92 Q313 92 312.3 89 Z" fill="#C8C8C8"/>
 </svg>
<div style="left:361px;top:80px;width:22px;height:4px;background:#4C80BD"></div>
<div style="left:370px;top:71px;width:4px;height:22px;background:#4C80BD"></div>
<svg style="left:403px;top:67px" width="28" height="31" viewBox="403 67 28 31">
   <path d="M410.5 68.5 L424 68.5 L429.5 74 L429.5 91.5 L410.5 91.5 Z" fill="#fff" stroke="#7F7F7F" stroke-width="1"/>
   <path d="M424 68.5 L424 74 L429.5 74" fill="none" stroke="#7F7F7F" stroke-width="1"/>
   <path d="M404.5 73.5 L418 73.5 L423.5 79 L423.5 96.5 L404.5 96.5 Z" fill="#fff" stroke="#7F7F7F" stroke-width="1"/>
   <path d="M418 73.5 L418 79 L423.5 79" fill="none" stroke="#7F7F7F" stroke-width="1"/>
 </svg>
<svg style="left:450px;top:70px" width="24" height="24" viewBox="0 0 24 24"><path d="M2 2 L22 22 M22 2 L2 22" stroke="#DD5F3D" stroke-width="3.6"/></svg>
<svg style="left:504px;top:68px" width="28" height="28" viewBox="0 0 28 28"><rect width="28" height="28" fill="#3A9AD2"/><path fill="#fff" d="M23.5 15.7 L23.5 10 Q23.5 6.7 20.2 6.7 L7.9 6.7 Q4.6 6.7 4.6 10 L4.6 17.7 Q4.6 21 7.9 21 L23.5 21 L23.2 19.2 Q22.6 17.8 20.5 17.8 L8.6 17.8 Q7.9 17.8 7.9 17.1 L7.9 10.6 Q7.9 9.9 8.6 9.9 L19.6 9.9 Q20.2 9.9 20.2 10.6 L20.2 12.5 Q20.5 15.2 23.5 15.7 Z"/></svg>
<svg style="left:572px;top:68px" width="28" height="28" viewBox="0 0 28 28"><rect width="28" height="28" fill="#3A9AD2"/><path fill="#fff" d="M23.5 15.7 L23.5 10 Q23.5 6.7 20.2 6.7 L7.9 6.7 Q4.6 6.7 4.6 10 L4.6 17.7 Q4.6 21 7.9 21 L23.5 21 L23.2 19.2 Q22.6 17.8 20.5 17.8 L8.6 17.8 Q7.9 17.8 7.9 17.1 L7.9 10.6 Q7.9 9.9 8.6 9.9 L19.6 9.9 Q20.2 9.9 20.2 10.6 L20.2 12.5 Q20.5 15.2 23.5 15.7 Z"/></svg>
<svg style="left:650px;top:68px" width="28" height="28" viewBox="0 0 28 28"><rect width="28" height="28" fill="#3A9AD2"/><path fill="#fff" d="M23.5 15.7 L23.5 10 Q23.5 6.7 20.2 6.7 L7.9 6.7 Q4.6 6.7 4.6 10 L4.6 17.7 Q4.6 21 7.9 21 L23.5 21 L23.2 19.2 Q22.6 17.8 20.5 17.8 L8.6 17.8 Q7.9 17.8 7.9 17.1 L7.9 10.6 Q7.9 9.9 8.6 9.9 L19.6 9.9 Q20.2 9.9 20.2 10.6 L20.2 12.5 Q20.5 15.2 23.5 15.7 Z"/></svg>
<svg style="left:210px;top:210px" width="7" height="7" viewBox="0 0 7 7"><path d="M0.8 5.6 L3.5 2 L6.2 5.6" fill="none" stroke="#6A6A6A" stroke-width="2"/></svg>
<svg style="left:210px;top:637px" width="7" height="7" viewBox="0 0 7 7"><path d="M0.8 1.2 L3.5 4.8 L6.2 1.2" fill="none" stroke="#6A6A6A" stroke-width="2"/></svg>
<svg style="left:949px;top:234px" width="7" height="7" viewBox="0 0 7 7"><path d="M0.8 5.6 L3.5 2 L6.2 5.6" fill="none" stroke="#6A6A6A" stroke-width="2"/></svg>
<svg style="left:949px;top:637px" width="7" height="7" viewBox="0 0 7 7"><path d="M0.8 1.2 L3.5 4.8 L6.2 1.2" fill="none" stroke="#6A6A6A" stroke-width="2"/></svg>
<svg style="left:401px;top:176px" width="7" height="6" viewBox="0 0 7 6"><path d="M0.9 0.9 L3.5 4.6 L6.1 0.9" fill="none" stroke="#6E6E6E" stroke-width="2.3"/></svg>
<svg style="left:20px;top:252px" width="10" height="13" viewBox="0 0 10 13"><path d="M1.3 11.6 L1.8 7.4 L5.6 1.9 Q6.6 0.8 7.6 1.4 Q8.5 2.2 7.8 3.3 L4 8.9 Z" fill="none" stroke="#555" stroke-width="1"/><rect x="5" y="11" width="1" height="1" fill="#555"/><rect x="7" y="11" width="1" height="1" fill="#555"/></svg>
<svg style="left:86px;top:251px" width="5" height="14" viewBox="0 0 5 14"><path d="M2.5 0 L2.5 13" stroke="#000" stroke-width="1.2" fill="none"/><path d="M1 0.5 L2 0.5 M3 0.5 L4 0.5 M1 12.5 L2 12.5 M3 12.5 L4 12.5 M1.5 7 L3.5 7" stroke="#000" stroke-width="1" fill="none"/></svg>
<div class="t" style="left:413px;top:10px;font-size:12px;color:#fff;letter-spacing:-0.01px;">User Administration</div>
<div class="t" style="left:19px;top:38px;font-size:12px;color:#fff;letter-spacing:-0.01px;">File</div>
<div class="t" style="left:70px;top:39px;font-size:12px;color:#2B6CC4;letter-spacing:-0.18px;">User</div>
<div class="t" style="left:11px;top:103px;font-size:12px;color:#000;letter-spacing:-0.48px;">Save &amp;</div>
<div class="t" style="left:14px;top:116px;font-size:12px;color:#000;letter-spacing:-0.35px;">Close</div>
<div class="t" style="left:77px;top:70px;font-size:12px;color:#000;letter-spacing:-0.10px;">Close</div>
<div class="t" style="left:77px;top:95px;font-size:12px;color:#000;letter-spacing:-0.69px;">Save</div>
<div class="t" style="left:40px;top:138px;font-size:12px;color:#6E6E6E;letter-spacing:-0.43px;">Actions</div>
<div class="t" style="left:126px;top:104px;font-size:12px;color:#000;letter-spacing:-0.26px;">Users</div>
<div class="t" style="left:178px;top:103px;font-size:12px;color:#000;letter-spacing:-0.34px;">Project</div>
<div class="t" style="left:166px;top:116px;font-size:12px;color:#000;letter-spacing:-0.47px;">permissions</div>
<div class="t" style="left:249px;top:103px;font-size:12px;color:#000;letter-spacing:-0.54px;">Folder</div>
<div class="t" style="left:234px;top:116px;font-size:12px;color:#000;letter-spacing:-0.47px;">permissions</div>
<div class="t" style="left:306px;top:104px;font-size:12px;color:#000;letter-spacing:-0.35px;">Roles</div>
<div class="t" style="left:218px;top:138px;font-size:12px;color:#6E6E6E;letter-spacing:-0.17px;">View</div>
<div class="t" style="left:363px;top:104px;font-size:12px;color:#000;letter-spacing:-0.78px;">Add</div>
<div class="t" style="left:404px;top:104px;font-size:12px;color:#000;letter-spacing:-0.57px;">Copy</div>
<div class="t" style="left:447px;top:104px;font-size:12px;color:#000;letter-spacing:-0.48px;">Delete</div>
<div class="t" style="left:496px;top:103px;font-size:12px;color:#000;letter-spacing:-0.51px;">Check all</div>
<div class="t" style="left:489px;top:116px;font-size:12px;color:#000;letter-spacing:-0.47px;">permissions</div>
<div class="t" style="left:557px;top:103px;font-size:12px;color:#000;letter-spacing:-0.37px;">Uncheck all</div>
<div class="t" style="left:557px;top:116px;font-size:12px;color:#000;letter-spacing:-0.47px;">permissions</div>
<div class="t" style="left:625px;top:103px;font-size:12px;color:#000;letter-spacing:-0.51px;">Set permissions</div>
<div class="t" style="left:628px;top:116px;font-size:12px;color:#000;letter-spacing:-0.46px;">from licnese(s)</div>
<div class="t" style="left:518px;top:138px;font-size:12px;color:#6E6E6E;letter-spacing:-0.13px;">Role</div>
<div class="t" style="left:14px;top:170px;font-size:11px;color:#1a1a1a;letter-spacing:-0.18px;">Roles:</div>
<div class="t" style="left:38px;top:189px;font-size:11px;color:#1a1a1a;letter-spacing:0.32px;">Name</div>
<div class="t" style="left:38px;top:210px;font-size:11px;color:#1a1a1a;">Project Administrator</div>
<div class="t" style="left:38px;top:231px;font-size:11px;color:#1a1a1a;letter-spacing:-0.15px;">Project User(Rm+Tm)</div>
<div class="t" style="left:38px;top:252px;font-size:11px;color:#1a1a1a;letter-spacing:-0.18px;">Project User(Rm)</div>
<div class="t" style="left:38px;top:273px;font-size:11px;color:#1a1a1a;letter-spacing:-0.14px;">Project User(Tm)</div>
<div class="t" style="left:38px;top:294px;font-size:11px;color:#1a1a1a;letter-spacing:-0.11px;">Project User(View only)</div>
<div class="t" style="left:227px;top:173px;font-size:11px;color:#1a1a1a;letter-spacing:-0.31px;">License:</div>
<div class="t" style="left:227px;top:194px;font-size:11px;color:#1a1a1a;letter-spacing:-0.22px;">Permissions in selected role:</div>
<div class="t" style="left:232px;top:213px;font-size:11px;color:#1a1a1a;letter-spacing:-0.01px;">Name</div>
<div class="t" style="left:764px;top:213px;font-size:11px;color:#1a1a1a;letter-spacing:0.03px;">All</div>
<div class="t" style="left:826px;top:213px;font-size:11px;color:#1a1a1a;">Assigned</div>
<div class="t" style="left:887px;top:213px;font-size:11px;color:#1a1a1a;letter-spacing:-0.14px;">Owned</div>
<div class="t" style="left:250.5px;top:233px;font-size:11px;color:#1a1a1a;letter-spacing:-0.17px;">Requirement management</div>
<div class="t" style="left:268.5px;top:252px;font-size:11px;color:#1a1a1a;letter-spacing:-0.45px;">View</div>
<div class="t" style="left:286.5px;top:271px;font-size:11px;color:#1a1a1a;letter-spacing:-0.30px;">View items</div>
<div class="t" style="left:286.5px;top:290px;font-size:11px;color:#1a1a1a;">View UML</div>
<div class="t" style="left:286.5px;top:309px;font-size:11px;color:#1a1a1a;letter-spacing:-0.15px;">Generate test cases from UML</div>
<div class="t" style="left:286.5px;top:328px;font-size:11px;color:#1a1a1a;letter-spacing:-0.33px;">Use discussions</div>
<div class="t" style="left:286.5px;top:347px;font-size:11px;color:#1a1a1a;letter-spacing:0.13px;">Export to Word</div>
<div class="t" style="left:268.5px;top:366px;font-size:11px;color:#1a1a1a;">Create</div>
<div class="t" style="left:286.5px;top:385px;font-size:11px;color:#1a1a1a;letter-spacing:-0.03px;">Create items</div>
<div class="t" style="left:286.5px;top:404px;font-size:11px;color:#1a1a1a;letter-spacing:-0.29px;">Create UML</div>
<div class="t" style="left:286.5px;top:423px;font-size:11px;color:#1a1a1a;letter-spacing:-0.13px;">Create comments</div>
<div class="t" style="left:286.5px;top:442px;font-size:11px;color:#1a1a1a;letter-spacing:0.11px;">Import from Word</div>
<div class="t" style="left:268.5px;top:461px;font-size:11px;color:#1a1a1a;letter-spacing:-0.06px;">Edit</div>
<div class="t" style="left:286.5px;top:480px;font-size:11px;color:#1a1a1a;letter-spacing:0.09px;">Edit state</div>
<div class="t" style="left:286.5px;top:499px;font-size:11px;color:#1a1a1a;letter-spacing:-0.10px;">Edit fields</div>
<div class="t" style="left:286.5px;top:518px;font-size:11px;color:#1a1a1a;letter-spacing:-0.09px;">Edit description</div>
<div class="t" style="left:286.5px;top:537px;font-size:11px;color:#1a1a1a;letter-spacing:-0.23px;">Edit comments</div>
<div class="t" style="left:286.5px;top:556px;font-size:11px;color:#1a1a1a;letter-spacing:-0.54px;">Edit UML</div>
<div class="t" style="left:286.5px;top:575px;font-size:11px;color:#1a1a1a;letter-spacing:0.11px;">Import from Word</div>
<div class="t" style="left:268.5px;top:594px;font-size:11px;color:#1a1a1a;">Delete</div>
<div class="t" style="left:286.5px;top:613px;font-size:11px;color:#1a1a1a;letter-spacing:-0.09px;">Delete items</div>
<div class="t" style="left:250.5px;top:632px;font-size:11px;color:#1a1a1a;letter-spacing:-0.02px;">Defect management</div>
</body></html>
